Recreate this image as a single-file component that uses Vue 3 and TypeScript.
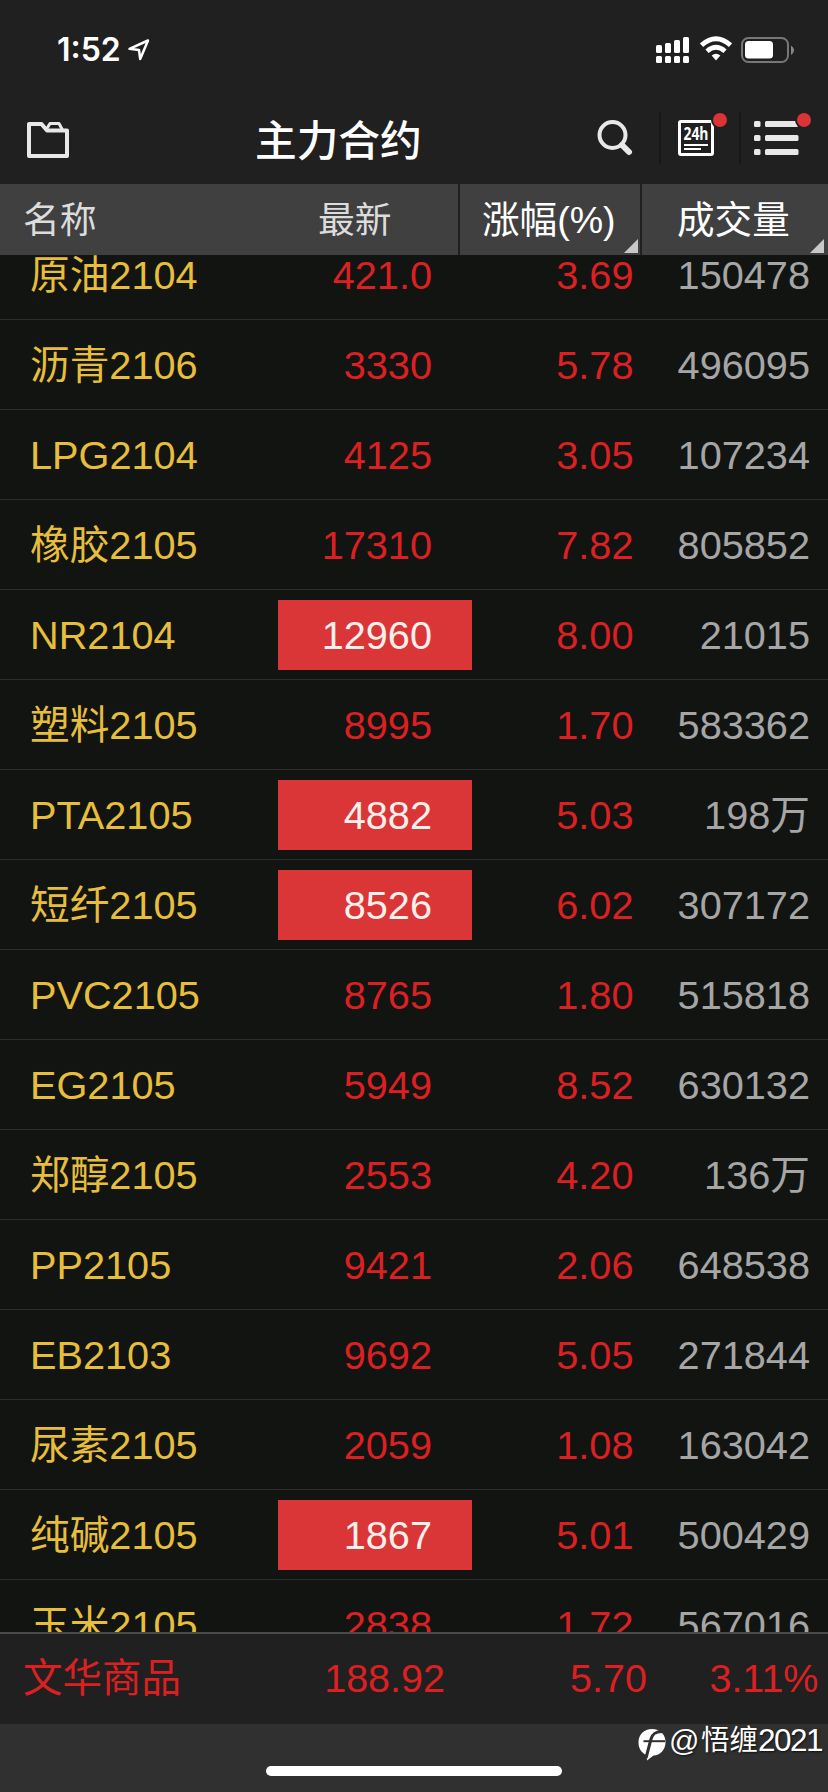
<script setup lang="ts">
interface Quote {
  name: string;
  price: string;
  change: string;
  volume: string;
  flash?: boolean;
}

const quotes: Quote[] = [
  { name: "原油2104", price: "421.0", change: "3.69", volume: "150478" },
  { name: "沥青2106", price: "3330", change: "5.78", volume: "496095" },
  { name: "LPG2104", price: "4125", change: "3.05", volume: "107234" },
  { name: "橡胶2105", price: "17310", change: "7.82", volume: "805852" },
  { name: "NR2104", price: "12960", change: "8.00", volume: "21015", flash: true },
  { name: "塑料2105", price: "8995", change: "1.70", volume: "583362" },
  { name: "PTA2105", price: "4882", change: "5.03", volume: "198万", flash: true },
  { name: "短纤2105", price: "8526", change: "6.02", volume: "307172", flash: true },
  { name: "PVC2105", price: "8765", change: "1.80", volume: "515818" },
  { name: "EG2105", price: "5949", change: "8.52", volume: "630132" },
  { name: "郑醇2105", price: "2553", change: "4.20", volume: "136万" },
  { name: "PP2105", price: "9421", change: "2.06", volume: "648538" },
  { name: "EB2103", price: "9692", change: "5.05", volume: "271844" },
  { name: "尿素2105", price: "2059", change: "1.08", volume: "163042" },
  { name: "纯碱2105", price: "1867", change: "5.01", volume: "500429", flash: true },
  { name: "玉米2105", price: "2838", change: "1.72", volume: "567016" },
];

const signalBars = [8, 10, 13, 16];
</script>

<template>
  <div class="screen">
    <div class="status-bar">
      <span class="time">1:52</span>
      <svg class="location" width="24" height="24" viewBox="0 0 24 24">
        <path d="M2.5 10.8 21 2.5 13.2 21 12 12Z" />
      </svg>
      <svg class="signal" width="34" height="27" viewBox="0 0 34 27">
        <template v-for="(h, i) in signalBars" :key="i">
          <rect :x="i * 9" :y="16 - h" width="6" :height="h" rx="1.5" />
          <rect :x="i * 9" y="19" width="6" height="7" rx="1.5" />
        </template>
      </svg>
      <svg class="wifi" width="32" height="26" viewBox="0 0 32 26">
        <path d="M1.500 9.200Q16-3.500 30.500 9.200" />
        <path d="M7 15.200Q16 7.500 25 15.200" />
        <path class="dot" d="M11.6 19.500Q16 16 20.4 19.500L16 24.500Z" />
      </svg>
      <svg class="battery" width="54" height="26" viewBox="0 0 54 26">
        <rect class="shell" x="1" y="1" width="46" height="24" rx="6.5" />
        <rect class="level" x="4" y="4" width="28" height="17.5" rx="3.5" />
        <path class="cap" d="M50 8.5Q56 13 50 18Z" />
      </svg>
    </div>

    <header class="nav">
      <svg class="folder" width="44" height="38" viewBox="0 0 44 38">
        <path d="M3 4H15.5L21 10.500H41V36H3Z" />
        <path class="tab" d="M20 10 24 3.500H33L36.5 10" />
      </svg>
      <h1>主力合约</h1>
      <button class="search">
        <svg width="36" height="38" viewBox="0 0 36 38">
          <circle cx="15.5" cy="16" r="13" />
          <path d="M25 26 32 33" />
        </svg>
      </button>
      <button class="news">
        <svg width="38" height="38" viewBox="0 0 38 38">
          <rect x="2.5" y="2.5" width="33" height="33" rx="1.5" />
          <text x="19" y="20.500" textLength="25" lengthAdjust="spacingAndGlyphs">24h</text>
          <path d="M7 26H31M7 30H24" />
        </svg>
        <i class="badge"></i>
      </button>
      <button class="menu">
        <svg width="46" height="36" viewBox="0 0 46 36">
          <template v-for="y in [1, 15, 29]" :key="y">
            <rect x="0" :y="y" width="6.5" height="6" rx="1.5" />
            <rect x="11" :y="y" width="33.5" height="6" rx="1.5" />
          </template>
        </svg>
        <i class="badge"></i>
      </button>
    </header>

    <div class="table-head">
      <span class="th th-name">名称</span>
      <span class="th th-price">最新</span>
      <span class="th sortable th-change">涨幅(%)</span>
      <span class="th sortable th-volume">成交量</span>
    </div>

    <main class="list">
      <div v-for="q in quotes" :key="q.name" class="row">
        <span class="name">{{ q.name }}</span>
        <span class="price" :class="{ flash: q.flash }">{{ q.price }}</span>
        <span class="change">{{ q.change }}</span>
        <span class="volume">{{ q.volume }}</span>
      </div>
    </main>

    <footer class="index">
      <span>文华商品</span>
      <span class="num">188.92</span>
      <span class="num">5.70</span>
      <span class="num">3.11%</span>
    </footer>

    <div class="bottom">
      <div class="home-indicator"></div>
      <div class="watermark">
        <svg width="30" height="34" viewBox="0 0 30 34">
          <path class="bubble" d="M15 1C23 1 28.5 6.5 28.5 14C28.5 22 23 27.5 16.5 27.5L10 32.5 9.5 27C4.5 25 1.500 20.5 1.5 14.5C1.5 6.5 7 1 15 1Z" />
          <path class="stroke" d="M25 3.500C18 3.500 15.500 6 14 11L9 30" />
          <path class="stroke thin" d="M6.5 13.2H28" />
        </svg>
        <span class="at">@</span><span class="user">悟缠</span><span class="year">2021</span>
      </div>
    </div>
  </div>
</template>

<style>
body {
  margin: 0;
  background: #121412;
}
</style>

<style scoped>
.screen {
  display: flex;
  flex-direction: column;
  width: 828px;
  height: 1792px;
  overflow: hidden;
  background: #121412;
  color: #fff;
  font-family: "Liberation Sans", "Noto Sans CJK SC", sans-serif;
}

svg {
  display: block;
  flex: none;
}

.status-bar {
  display: flex;
  box-sizing: border-box;
  height: 100px;
  padding: 0 33px 0 57px;
  background: #202020;
}

.time {
  width: 70px;
  margin-top: 30px;
  font: 600 32px/40px Inter, sans-serif;
}

.location {
  margin-top: 38px;
  fill: none;
  stroke: #fff;
  stroke-width: 2.5;
  stroke-linejoin: round;
}

.signal {
  margin: 37px 10px 0 auto;
  fill: #fff;
}

.wifi {
  margin: 36px 9px 0 0;
  fill: none;
  stroke: #fff;
  stroke-width: 4.8;
}

.wifi .dot {
  fill: #fff;
  stroke: none;
}

.battery {
  margin-top: 37px;
}

.battery .shell {
  fill: none;
  stroke: #777;
  stroke-width: 2;
}

.battery .level {
  fill: #fff;
}

.battery .cap {
  fill: #888;
}

.nav {
  display: grid;
  grid-template-columns: 255px 325px 79px 80px 1fr;
  height: 84px;
  background: #202020;
}

.folder {
  margin: 20px 0 0 26px;
  fill: none;
  stroke: #e8e8e8;
  stroke-width: 4;
  stroke-linejoin: round;
}

.folder .tab {
  stroke-width: 3;
}

h1 {
  margin: 8px 0 0;
  font-family: "Noto Sans CJK SC", sans-serif;
  font-size: 41.7px;
  line-height: 60px;
  font-weight: 500;
}

button {
  position: relative;
  display: flex;
  align-items: flex-start;
  height: 52px;
  margin: 12px 0 0;
  padding: 0;
  border: 0;
  background: none;
}

.news,
.menu {
  border-left: 2px solid #171717;
}

.search svg {
  margin: 7px 0 0 17px;
  fill: none;
  stroke: #e8e8e8;
  stroke-width: 4;
}

.search path {
  stroke-width: 6;
  stroke-linecap: round;
}

.news svg {
  margin: 7px 0 0 16px;
  fill: none;
  stroke: #fff;
  stroke-width: 3;
}

.news text {
  fill: #fff;
  stroke: none;
  font: 700 18px "Open Sans", sans-serif;
  text-anchor: middle;
}

.news path {
  stroke-width: 2;
}

.menu svg {
  margin: 8px 0 0 13px;
  fill: #e8e8e8;
}

.badge {
  position: absolute;
  top: 1px;
  left: 52px;
  width: 14px;
  height: 14px;
  border-radius: 50%;
  background: #d93437;
  box-shadow: 0 0 0 2px #202020;
}

.menu .badge {
  left: 56px;
}

.table-head {
  display: grid;
  grid-template-columns: 278px 180px 182px 1fr;
  height: 71px;
  background: #404040;
  font-size: 37.6px;
  line-height: 73px;
}

.th {
  position: relative;
  box-sizing: border-box;
  height: 71px;
}

.th-name,
.th-price {
  padding-left: 23px;
  color: #dcdcdc;
  font-size: 36.8px;
}

.th-price {
  padding-left: 40px;
}

.sortable {
  border-left: 2px solid #202020;
}

.th-change {
  padding-left: 22px;
}

.th-volume {
  padding-left: 35px;
}

.sortable::after {
  content: "";
  position: absolute;
  right: 2px;
  bottom: 2px;
  width: 14px;
  height: 14px;
  background: #c8c8c8;
  clip-path: polygon(100% 0, 100% 100%, 0 100%);
}

.th-volume::after {
  right: 4px;
}

.list {
  height: 1377px;
  overflow: hidden;
}

.row {
  display: grid;
  grid-template-columns: 278px 194px 161.5px 176.5px;
  box-sizing: border-box;
  height: 90px;
  border-bottom: 1px solid #2c2e2c;
  color: #dc2022;
  font-size: 39.7px;
  line-height: 70px;
  padding-top: 10px;
  text-align: right;
}

.row:first-child {
  margin-top: -25px;
}

.name {
  padding-left: 30px;
  color: #e6be3c;
  text-align: left;
}

.price {
  height: 70px;
  padding-right: 40px;
}

.flash {
  background: #da3537;
  color: #fff0ec;
}

.volume {
  color: #a6a6a6;
}

.index {
  display: grid;
  grid-template-columns: 254px 191px 202px 171.5px;
  box-sizing: border-box;
  height: 92px;
  border-top: 2px solid #4a4a4a;
  background: #202020;
  color: #dc2022;
  font-size: 39.5px;
  line-height: 88px;
}

.index span:first-child {
  padding-left: 23px;
}

.num {
  text-align: right;
}

.bottom {
  position: relative;
  flex: 1;
  background: #303030;
}

.home-indicator {
  width: 296px;
  height: 10px;
  margin: 42px auto 0;
  border-radius: 5px;
  background: #fff;
}

.watermark {
  position: absolute;
  top: 0;
  right: 6px;
  display: flex;
  height: 34px;
  line-height: 33px;
  text-shadow: 1px 1px 2px #111;
}

.watermark svg {
  margin: 4px 2px 0 0;
}

.bubble {
  fill: #fff;
}

.stroke {
  fill: none;
  stroke: #303030;
  stroke-width: 3;
}

.stroke.thin {
  stroke-width: 2;
}

.at {
  width: 32px;
  font-size: 30px;
}

.user {
  width: 57px;
  font-size: 28.5px;
}

.year {
  width: 64px;
  font-size: 31.5px;
  letter-spacing: -1.5px;
}
</style>
